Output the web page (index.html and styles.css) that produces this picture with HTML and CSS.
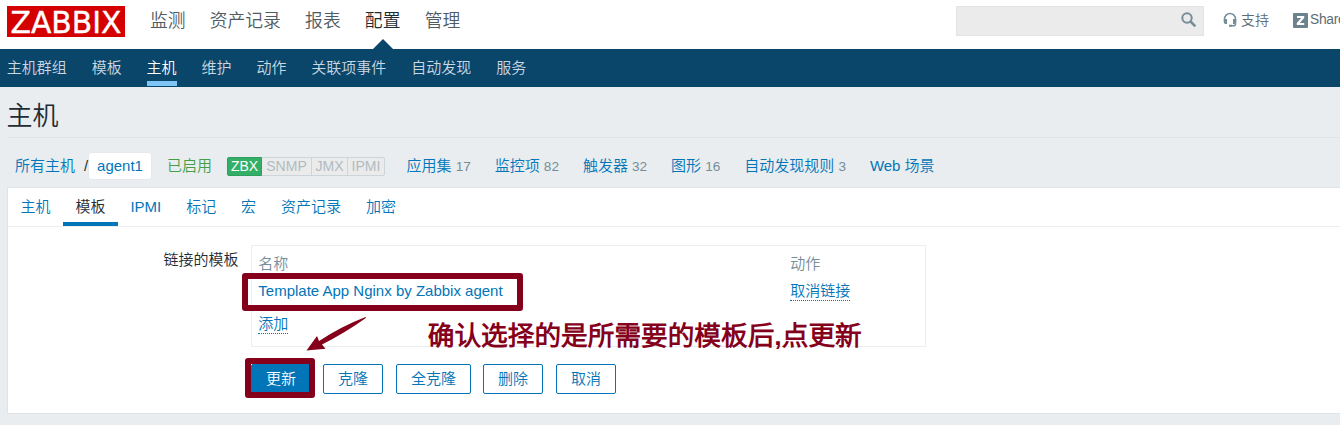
FILE: index.html
```
<!DOCTYPE html>
<html lang="zh-CN">
<head>
<meta charset="utf-8">
<title>主机</title>
<link rel="stylesheet" href="styles.css">
</head>
<body>
<header class="top">
  <a class="logo"><svg width="118" height="31"><rect width="118" height="31" fill="#d40000"/><text class="logo-text" x="3.5" y="26.5" textLength="111" lengthAdjust="spacingAndGlyphs">ZABBIX</text></svg></a>
  <nav class="main-nav"><a>监测</a><a>资产记录</a><a>报表</a><a class="current">配置</a><a>管理</a></nav>
  <div class="search"><svg width="16" height="16" viewBox="0 0 16 16" fill="none" stroke="#768d99"><circle cx="6" cy="6" r="4.7" stroke-width="2"/><path d="M9.5 9.5L14.4 14.4" stroke-width="2.5"/></svg></div>
  <a class="support"><svg width="14" height="16" viewBox="0 0 14 16"><path d="M1.5 10V7a5.5 5.5 0 0 1 11 0v3M12.5 10v2q0 1.8-2.5 1.8H7.5" fill="none" stroke="#768d99" stroke-width="1.5"/><path d="M1 7h3v5H2.5Q.8 12 .8 10zM10 7h3.2v3q0 2-1.7 2H10zM6 12.8h3v2H6z" fill="#768d99"/></svg>支持</a>
  <a class="share"><svg width="15" height="15"><rect width="15" height="15" rx="1" fill="#6c828d"/><path d="M4 3h7.2v2L6.8 10h4.4v2H3.8v-2L8.2 5H4z" fill="#fff"/></svg>Share</a>
</header>
<nav class="sub-nav"><a>主机群组</a><a>模板</a><a class="current">主机</a><a>维护</a><a>动作</a><a>关联项事件</a><a>自动发现</a><a>服务</a></nav>
<main>
  <h1>主机</h1>
  <div class="crumbs">
    <a class="all">所有主机</a><span class="slash">/</span><a class="host">agent1</a><span class="enabled">已启用</span>
    <div class="status"><span class="on">ZBX</span><span class="snmp">SNMP</span><span class="jmx">JMX</span><span class="ipmi">IPMI</span></div>
    <div class="links"><a>应用集 <i>17</i></a><a>监控项 <i>82</i></a><a>触发器 <i>32</i></a><a>图形 <i>16</i></a><a>自动发现规则 <i>3</i></a><a>Web 场景</a></div>
  </div>
  <section class="panel">
    <nav class="tabs"><a>主机</a><a class="current">模板</a><a>IPMI</a><a>标记</a><a>宏</a><a>资产记录</a><a>加密</a></nav>
    <div class="form">
      <label>链接的模板</label>
      <div class="field">
        <div class="templates">
          <div class="row head"><span>名称</span><span>动作</span></div>
          <div class="row"><a>Template App Nginx by Zabbix agent</a><a class="dotted">取消链接</a></div>
          <div class="row add"><a class="dotted">添加</a></div>
          <div class="mark mark-template"></div>
          <svg class="arrow" width="62" height="36" viewBox="0 0 62 36"><path d="M59.5 1Q60.5 1 59.5 2.3Q39 17 16 28.5L19.5 32.8L.5 34.5L11 20L13 25Q36 10 59.5 1Z" fill="#85001a"/></svg>
          <div class="note">确认选择的是所需要的模板后,点更新</div>
        </div>
        <div class="buttons"><button class="primary">更新<span class="mark mark-update"></span></button><button>克隆</button><button class="wide">全克隆</button><button>删除</button><button>取消</button></div>
      </div>
    </div>
  </section>
</main>
</body>
</html>
```
FILE: styles.css
```
* { box-sizing: border-box; }
body { margin: 0; width: 1340px; height: 425px; overflow: hidden; background: #e9edf0; color: #1f2c33; font: 350 15px/20px "Liberation Sans", "Noto Sans CJK SC DemiLight", "Noto Sans CJK SC", sans-serif; white-space: nowrap; }
a { color: #0275b8; text-decoration: none; }
.top { height: 49px; background: #fff; display: flex; align-items: flex-start; padding: 6px 0 0 7px; }
.logo { height: 31px; }
.logo svg { display: block; overflow: visible; }
.logo-text { font: 31px "DejaVu Sans", sans-serif; fill: #fff; stroke: #fff; stroke-width: 0.4px; }
.main-nav { display: flex; gap: 24.2px; margin-left: 25px; flex: 1; font-size: 17.8px; line-height: 30px; height: 43px; }
.main-nav a { color: #4f5b63; }
.main-nav .current { color: #1f2c33; position: relative; }
.main-nav .current::after { content: ""; position: absolute; left: 8px; bottom: 0; border: solid transparent; border-width: 0 10px 10px; border-bottom-color: #0a466a; }
.search { width: 248px; height: 30px; background: #ebebeb; border: 1px solid #dfe4e7; display: flex; justify-content: flex-end; padding: 5px 6px 0 0; }
.support, .share { display: flex; align-items: center; gap: 4px; height: 28px; font-size: 14px; color: #5d6c74; }
.support { margin-left: 19px; width: 70px; }
.share { width: 47px; gap: 2px; font-size: 13.8px; letter-spacing: -0.3px; }
.share svg { flex: none; }
.sub-nav { height: 38px; background: #0a466a; display: flex; gap: 24.9px; padding-left: 6.8px; line-height: 37px; }
.sub-nav a { color: #c9d8e2; height: 37px; }
.sub-nav .current { color: #fff; border-bottom: 5px solid #7ec4f4; }
main { padding-left: 7px; }
h1 { margin: 0; height: 51px; border-bottom: 1px solid #dfe4e7; font-size: 26px; font-weight: 350; line-height: 58px; text-indent: -0.5px; }
.crumbs { display: flex; align-items: center; height: 49px; padding: 7px 0 0 8px; }
.all { width: 69px; }
.slash { width: 5px; }
.host { width: 62px; height: 26px; margin-right: 16px; background: #fff; border-radius: 2px; text-align: center; line-height: 26px; box-shadow: 0 0 1px #ccd5d9; }
.enabled { width: 60px; color: #429e47; }
.status { display: flex; width: 158px; height: 19px; border: 1px solid #ccd5d9; border-radius: 2px; background: #ebebeb; color: #afbcc3; font-size: 14px; line-height: 17px; text-align: center; }
.status span { border-right: 1px solid #ccd5d9; }
.status .on { width: 35px; margin: -1px 0 -1px -1px; border: 1px solid #2f9f5e; border-radius: 2px 0 0 2px; background: #34af67; color: #fff; }
.status .snmp { width: 50px; }
.status .jmx { width: 36px; }
.status .ipmi { flex: 1; border: 0; }
.links { display: flex; gap: 23.9px; margin-left: 21.5px; }
.links i { font-size: 13.6px; font-style: normal; color: #768d99; }
.panel { height: 227px; background: #fff; border: 1px solid #dfe4e7; border-right: 0; }
.tabs { height: 39px; border-bottom: 1px solid #ebeef0; display: flex; }
.tabs a { padding: 0 12.47px; height: 38px; line-height: 38px; }
.tabs .current { color: #1f2c33; border-bottom: 4px solid #0275b8; }
.form { display: flex; padding-top: 18px; }
label { width: 230.5px; text-align: right; line-height: 29px; }
.field { margin-left: 12.5px; }
.templates { position: relative; width: 675px; height: 102px; border: 1px solid #ebeef0; padding: 4px 7px 0 6.3px; }
.row { display: grid; grid-template-columns: 532px auto; justify-items: start; height: 27px; line-height: 27px; }
.head { color: #768d99; }
.add { padding-top: 6px; }
.dotted { height: 24px; border-bottom: 1px dotted #0275b8; }
.mark { position: absolute; border: 6px solid #85001a; border-radius: 3px; }
.mark-template { left: -10px; top: 27px; width: 281px; height: 38px; }
.mark-update { left: -7px; top: -7px; width: 70px; height: 40px; }
.arrow { position: absolute; left: 54px; top: 70px; }
.note { position: absolute; left: 175.8px; top: 72px; font-size: 26.67px; line-height: 36px; font-weight: 700; color: #85001a; }
.buttons { display: flex; gap: 13px; margin-top: 17px; }
button { width: 60px; height: 30px; padding: 0; background: #fff; border: 1px solid #0275b8; border-radius: 2px; color: #0275b8; font: inherit; line-height: 28px; }
.wide { width: 75px; margin-right: -1px; }
.primary { position: relative; background: #0275b8; color: #fff; margin-right: -1px; }
```
